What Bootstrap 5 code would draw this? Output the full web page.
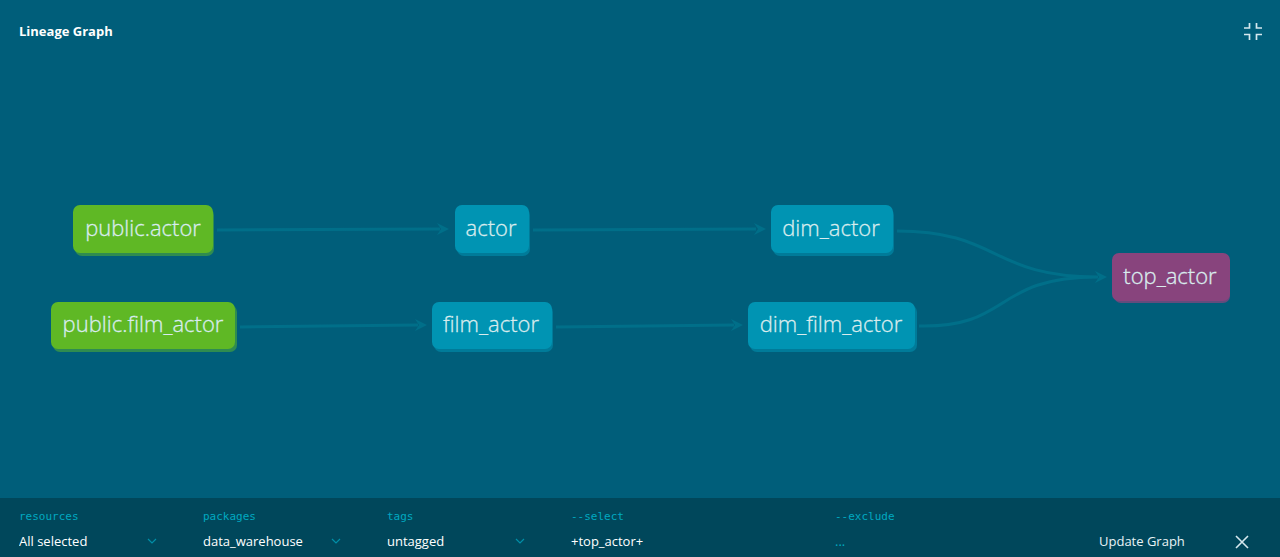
<!DOCTYPE html>
<html lang="en">
<head>
<meta charset="utf-8">
<meta name="viewport" content="width=device-width, initial-scale=1">
<title>Lineage Graph</title>
<link href="https://cdn.jsdelivr.net/npm/bootstrap@5.3.0/dist/css/bootstrap.min.css" rel="stylesheet">
<style>
  body { background: #005e7a; color: #fff; font: 13px/20px "Open Sans", "Noto Sans", sans-serif; }
  .graph-title { font-size: 13px; line-height: 20px; font-weight: 700; }
  .graph-head { padding: 21px 18px 21px 19px; }
  .icon-btn { color: #d5e8ee; line-height: 0; }
  .lineage text { font-family: "Open Sans", "Noto Sans", sans-serif; font-weight: 300; font-size: 22px; fill: #d9ecee; stroke: #d9ecee; stroke-width: .3px; text-anchor: middle; }
  .edge { fill: none; stroke: #006f89; stroke-width: 3; }
  .tip { fill: #006f89; }
  .src { fill: #5fb825; } .src-shade { fill: #2f8c50; }
  .model { fill: #0094b3; } .model-shade { fill: #007b99; }
  .picked { fill: #88447d; } .picked-shade { fill: #624c7d; }
  .filter-bar { display: grid; grid-template-columns: 184fr 184fr 184fr 264fr 264fr 162fr; background: #00475b; padding: 9px 19px 6px; }
  .filter-bar label { display: block; color: #00a9c0; font: 11px/20px "DejaVu Sans Mono", monospace; }
  .filter-bar .form-select, .filter-bar .form-control { background-color: transparent; border: 0; border-radius: 0; color: #fff; font-size: 13px; line-height: 20px; min-height: 0; padding: 0; margin-top: 4px; }
  .filter-bar .form-select { width: 75%; background-image: url("data:image/svg+xml,%3Csvg xmlns='http://www.w3.org/2000/svg' viewBox='0 0 10 6'%3E%3Cpath d='M1 1l4 4 4-4' fill='none' stroke='%23008fa8' stroke-width='1.2'/%3E%3C/svg%3E"); background-size: 10px 6px; background-position: right center; }
  .filter-bar .form-select option { color: #00475b; }
  .filter-bar .form-control::placeholder { color: #00a9c0; opacity: 1; }
  .update-btn { color: #e8f3f6; font-size: 13px; line-height: 20px; }
</style>
</head>
<body class="d-flex flex-column min-vh-100">
<header class="graph-head d-flex justify-content-between align-items-center">
  <h1 class="graph-title m-0">Lineage Graph</h1>
  <button type="button" class="btn icon-btn p-0 border-0" aria-label="Exit full screen">
    <svg width="18" height="18" viewBox="0 0 18 18" fill="none" stroke="currentColor" stroke-width="1.7"><path d="M0 6h5.5V1M18 6h-5.500V1M0 12.500h5.500v5.500M18 12.500h-5.500v5.500"/></svg>
  </button>
</header>
<main class="flex-grow-1 d-flex align-items-center">
  <svg class="lineage w-100" viewBox="0 62 1280 436" role="img" aria-label="Lineage of top_actor">
    <defs><path id="tip" class="tip" d="M0 0L-12-6L-8 0L-12 6Z"/></defs>
    <path class="edge" d="M217 230L440 229M240 327L418 325M533 230L756 229M556 327L734 325"/>
    <path class="edge" d="M897 231C1000 231 990 277 1098 277M919 326C1012 328 992 277 1098 277"/>
    <use href="#tip" x="449" y="229"/><use href="#tip" x="427" y="325"/>
    <use href="#tip" x="766" y="229"/><use href="#tip" x="743" y="325"/><use href="#tip" x="1107" y="277"/>

    <rect class="src-shade" x="75" y="208" width="139" height="48" rx="7"/><rect class="src" x="73" y="205" width="140" height="48" rx="7"/>
    <rect class="src-shade" x="53" y="305" width="184" height="47" rx="7"/><rect class="src" x="51" y="302" width="184" height="47" rx="7"/>
    <rect class="model-shade" x="457" y="208" width="73" height="48" rx="7"/><rect class="model" x="455" y="205" width="74" height="48" rx="7"/>
    <rect class="model-shade" x="434" y="305" width="119" height="47" rx="7"/><rect class="model" x="432" y="302" width="120" height="47" rx="7"/>
    <rect class="model-shade" x="773" y="208" width="121" height="48" rx="7"/><rect class="model" x="771" y="205" width="122" height="48" rx="7"/>
    <rect class="model-shade" x="750" y="305" width="167" height="47" rx="7"/><rect class="model" x="748" y="302" width="167" height="47" rx="7"/>
    <rect class="picked-shade" x="1114" y="256" width="116" height="47" rx="7"/><rect class="picked" x="1112" y="253" width="118" height="48" rx="7"/>

    <text x="143" y="236">public.actor</text><text x="143" y="332">public.film_actor</text>
    <text x="491" y="236">actor</text><text x="491" y="332">film_actor</text>
    <text x="831" y="236">dim_actor</text><text x="831" y="332">dim_film_actor</text>
    <text x="1170" y="284">top_actor</text>
  </svg>
</main>
<form class="filter-bar">
  <div><label for="resources">resources</label><select id="resources" class="form-select"><option>All selected</option></select></div>
  <div><label for="packages">packages</label><select id="packages" class="form-select"><option>data_warehouse</option></select></div>
  <div><label for="tags">tags</label><select id="tags" class="form-select"><option>untagged</option></select></div>
  <div><label for="select">--select</label><input id="select" type="text" class="form-control" value="+top_actor+"></div>
  <div><label for="exclude">--exclude</label><input id="exclude" type="text" class="form-control" placeholder="..."></div>
  <div class="d-flex justify-content-between align-items-end pe-2">
    <button type="button" class="btn update-btn p-0 border-0">Update Graph</button>
    <button type="button" class="btn icon-btn p-0 border-0 me-1" aria-label="Close"><svg width="14" height="18" viewBox="0 0 14 18" fill="none" stroke="currentColor" stroke-width="1.6"><path d="M1 3l12 12M13 3L1 15"/></svg></button>
  </div>
</form>
<script src="https://cdn.jsdelivr.net/npm/bootstrap@5.3.0/dist/js/bootstrap.bundle.min.js"></script>
</body>
</html>
